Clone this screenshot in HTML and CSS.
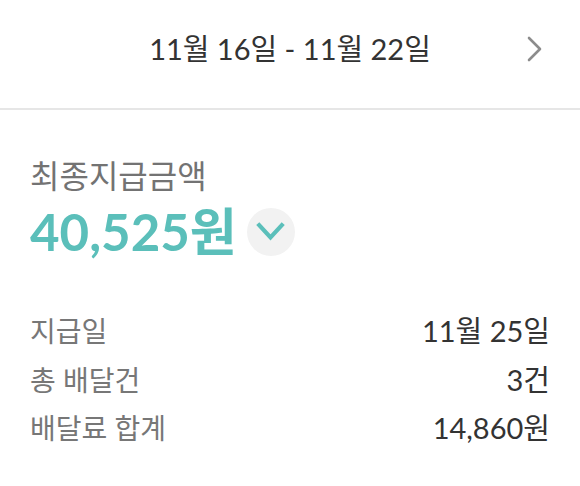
FILE: index.html
```html
<!DOCTYPE html>
<html lang="ko">
<head>
  <meta charset="UTF-8">
  <meta name="viewport" content="width=device-width,initial-scale=1.0">
  <title>정산 내역</title>
  <link rel="stylesheet" href="styles.css">
</head>
<body>

  <div class="week-bar">
    <span class="week-range">11월 16일 - 11월 22일</span>
    <button class="week-next" aria-label="다음 주">
      <svg width="18" height="28" viewBox="0 0 18 28">
        <path d="M3 3 L14 14 L3 25" fill="none" stroke="#8c8c8c" stroke-width="2.6" stroke-linecap="round" stroke-linejoin="round"/>
      </svg>
    </button>
  </div>

  <div class="summary">
    <div class="summary-label">최종지급금액</div>
    <div class="summary-total">
      <span class="amount">40,525원</span>
      <button class="toggle" aria-label="펼치기">
        <svg width="29" height="19" viewBox="0 0 29 19">
          <path d="M3.2 3.2 L14.5 15.4 L25.8 3.2" fill="none" stroke="#5bbfba" stroke-width="4.2" stroke-linecap="square" stroke-linejoin="miter"/>
        </svg>
      </button>
    </div>

    <div class="details">
      <div class="row"><span class="key">지급일</span><span class="val">11월 25일</span></div>
      <div class="row"><span class="key">총 배달건</span><span class="val">3건</span></div>
      <div class="row"><span class="key">배달료 합계</span><span class="val">14,860원</span></div>
    </div>
  </div>

</body>
</html>
```

FILE: styles.css
```css
body {
  margin: 0;
  padding: 0;
  background: #fff;
  font-family: "Lato", "Noto Sans CJK KR", sans-serif;
  color: #333;
}
button {
  border: none;
  background: none;
  padding: 0;
  cursor: pointer;
}
.week-bar {
  position: relative;
  height: 108px;
  display: flex;
  align-items: center;
  justify-content: center;
  border-bottom: 2px solid #e6e6e6;
}
.week-range {
  font-size: 29px;
  color: #333;
  margin-top: -14px;
}
.week-next {
  position: absolute;
  right: 36px;
  top: 35px;
  display: flex;
}
.summary {
  padding: 44px 30px 0 30px;
}
.summary-label {
  font-size: 32px;
  color: #737373;
  line-height: 1.4;
}
.summary-total {
  display: flex;
  align-items: center;
  gap: 10px;
}
.amount {
  font-size: 51px;
  font-weight: 700;
  color: #5bbfba;
  line-height: 1.3;
}
.toggle {
  width: 48px;
  height: 48px;
  border-radius: 50%;
  background: #f2f2f2;
  display: flex;
  align-items: center;
  justify-content: center;
}
.details {
  margin-top: 42px;
}
.row {
  display: flex;
  justify-content: space-between;
  align-items: baseline;
  font-size: 28px;
  line-height: 48.5px;
}
.key {
  color: #777;
}
.val {
  color: #333;
  font-size: 29px;
}
```
